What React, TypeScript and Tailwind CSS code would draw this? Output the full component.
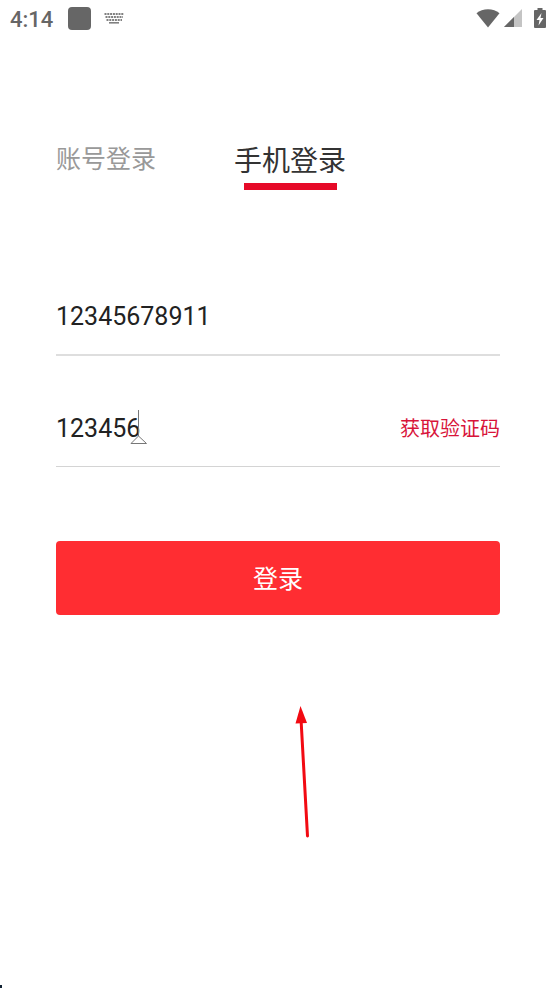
import React, { useState } from "react";

const StatusBar: React.FC = () => {
  return (
    <header className="flex h-9 items-center justify-between px-[10px] text-[#666]">
      <div className="flex items-center">
        <span className="w-[58px] pt-1 text-[22px] font-medium leading-8">4:14</span>
        <span className="h-[23px] w-[23px] rounded bg-[#666]" />
        {/* Keyboard */}
        <svg className="ml-[13px] h-3 w-5" viewBox="0 0 20 12" aria-hidden="true">
          <g stroke="#808080" strokeWidth="2" fill="none">
            <path d="M0.5 2H19.5" strokeDasharray="2 0.8" />
            <path d="M1.5 5H19" strokeDasharray="2 0.8" />
            <path d="M2.5 8H18" strokeDasharray="2 0.8" />
            <path d="M5 10.8H15" strokeWidth="1.6" />
          </g>
        </svg>
      </div>
      <div className="flex items-center">
        {/* Wifi */}
        <svg className="h-[19px] w-6" viewBox="0 0 24 19" aria-hidden="true">
          <path d="M0.5 4.2C3.6 1.7 7.6 0.3 12 0.3s8.4 1.4 11.5 3.9L12 18.5z" fill="#666" />
        </svg>
        {/* Signal */}
        <svg className="ml-1 h-[18px] w-[18px]" viewBox="0 0 18 18" aria-hidden="true">
          <path d="M0 18L18 0V18z" fill="#c4c4c4" />
          <path d="M0 18L10 8V18z" fill="#666" />
        </svg>
        {/* Battery */}
        <svg className="ml-3 h-5 w-3" viewBox="0 0 12 20" aria-hidden="true">
          <path
            d="M3.5 0h5v2H11a1 1 0 0 1 1 1v16a1 1 0 0 1-1 1H1a1 1 0 0 1-1-1V3a1 1 0 0 1 1-1h2.500z"
            fill="#666"
          />
          <path d="M7.500 5L2.500 12H5.500L4.500 17.500L9.500 10H6.500z" fill="#fff" />
        </svg>
      </div>
    </header>
  );
};

interface TabProps {
  label: string;
  active: boolean;
  onClick: () => void;
}

const Tab: React.FC<TabProps> = ({ label, active, onClick }) => {
  return (
    <button
      type="button"
      role="tab"
      aria-selected={active}
      onClick={onClick}
      className={`flex flex-col items-center ${
        active ? "text-[28px] leading-[42px] text-[#333]" : "text-[25px] leading-[38px] text-[#999]"
      }`}
    >
      {label}
      {active && <span className="h-[7px] w-[93px] bg-[#e60a28]" />}
    </button>
  );
};

export default function App() {
  const [tab, setTab] = useState("phone");
  const [phone, setPhone] = useState("12345678911");
  const [code, setCode] = useState("123456");

  return (
    <div className="flex min-h-screen flex-col bg-white font-['Roboto','Noto_Sans_CJK_SC',sans-serif]">
      <StatusBar />

      <main className="px-14 pt-[105px]">
        <div role="tablist" className="flex gap-[78px]">
          <Tab label="账号登录" active={tab === "account"} onClick={() => setTab("account")} />
          <Tab label="手机登录" active={tab === "phone"} onClick={() => setTab("phone")} />
        </div>

        <form onSubmit={(e) => e.preventDefault()}>
          <div className="mt-24 border-b-2 border-[#dedede] pb-2">
            <input
              type="tel"
              aria-label="手机号"
              value={phone}
              onChange={(e) => setPhone(e.target.value)}
              className="block h-15 w-full text-[25px] text-[#222] outline-none"
            />
          </div>

          <div className="mt-11 flex items-center border-b border-[#d4d4d4] pb-[10px]">
            <div className="relative min-w-0 flex-1">
              <input
                type="text"
                aria-label="验证码"
                value={code}
                onChange={(e) => setCode(e.target.value)}
                className="block h-14 w-full text-[25px] text-[#222] outline-none"
              />
              {/* Caret with its drag handle */}
              <svg
                className="pointer-events-none absolute left-[74px] top-[10px] h-9 w-[18px]"
                viewBox="0 0 18 36"
                fill="none"
                stroke="#777"
                aria-hidden="true"
              >
                <path d="M8.500 0V26L1 33.500H16.500L8.500 26" />
              </svg>
            </div>
            <button type="button" className="pt-0.5 text-xl leading-8 text-[#d8143a]">
              获取验证码
            </button>
          </div>

          <button
            type="submit"
            className="mt-[74px] h-[74px] w-full rounded bg-[#ff2d32] pt-1 text-[25px] text-white"
          >
            登录
          </button>
        </form>

        {/* Arrow pointing up at the button */}
        <svg className="mx-auto mt-[90px] h-[134px] w-16" viewBox="0 0 64 134" aria-hidden="true">
          <path d="M55 14L61.500 131" stroke="#f20a12" strokeWidth="3" strokeLinecap="round" />
          <path d="M54.500 1L61 18L49.500 18.500z" fill="#f20a12" />
        </svg>
      </main>

      <span className="mt-auto h-[3px] w-[2px] bg-[#123]" />
    </div>
  );
}
